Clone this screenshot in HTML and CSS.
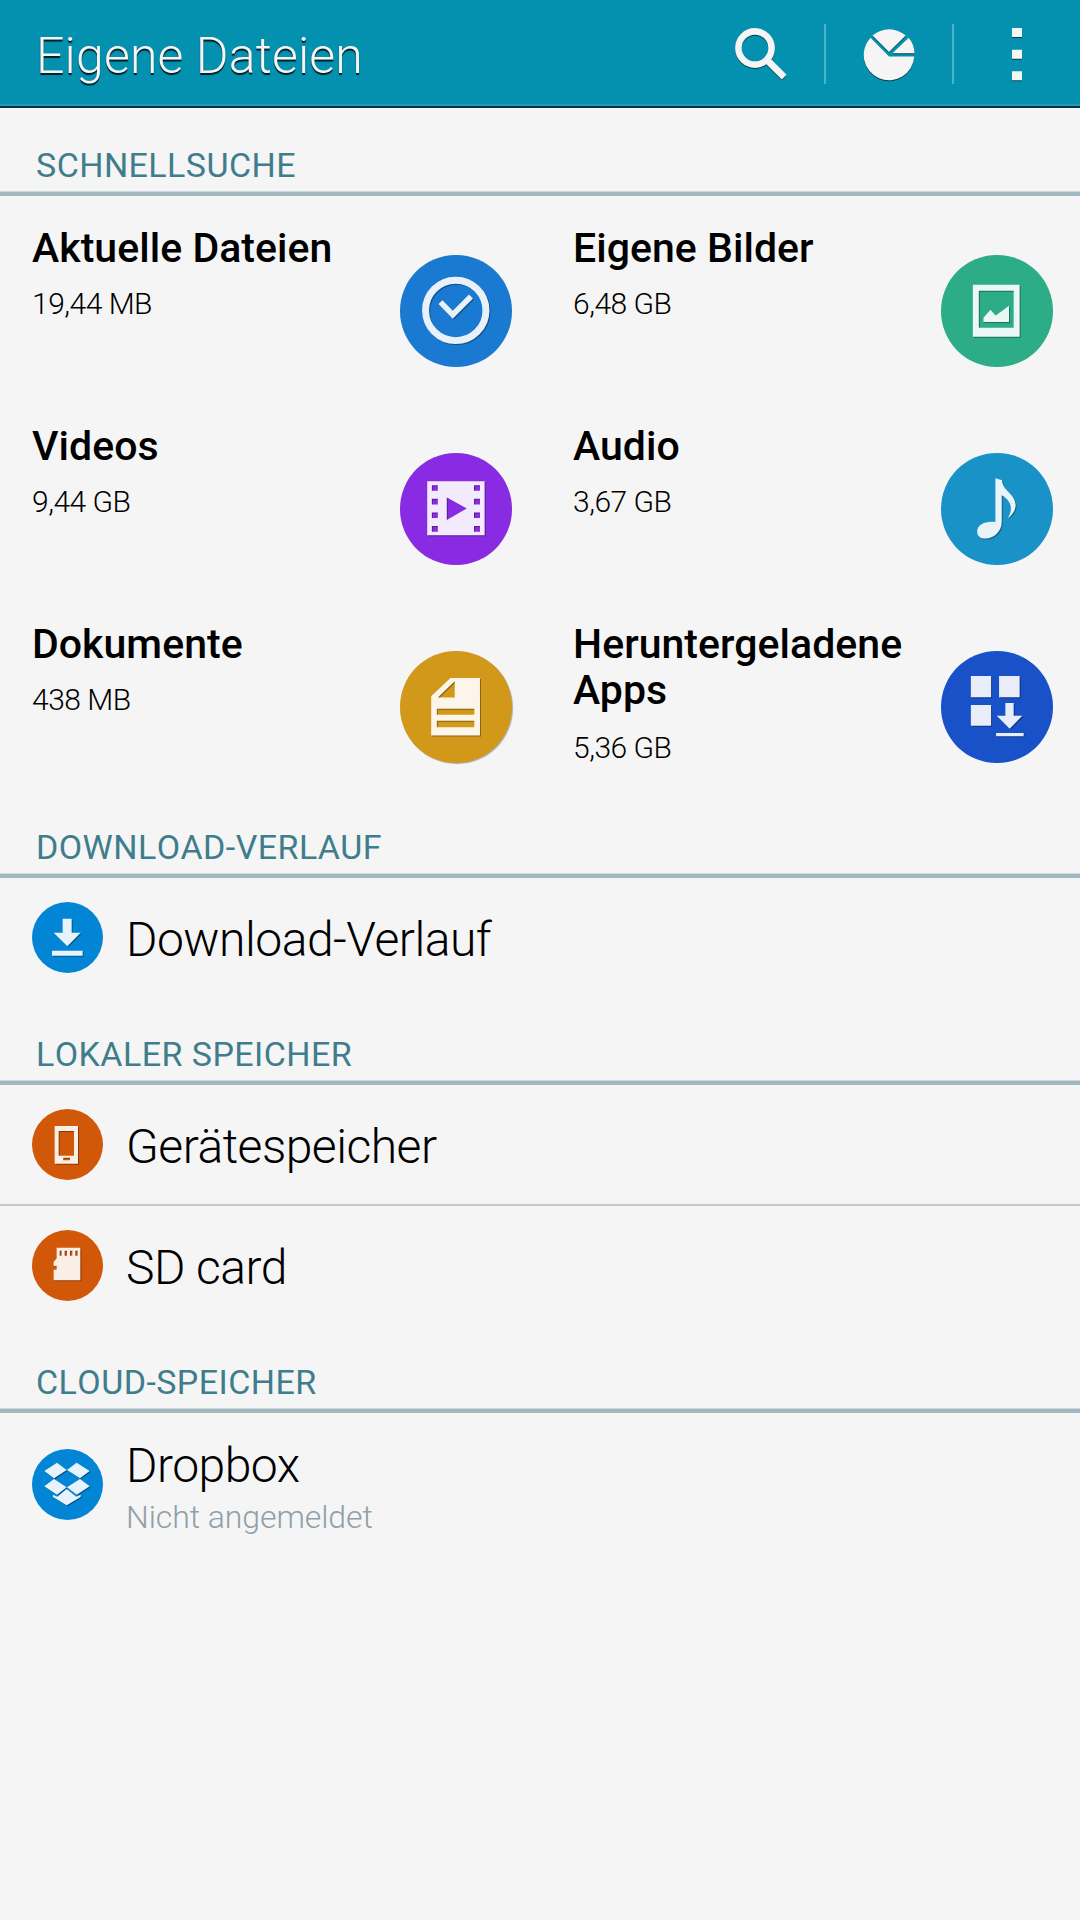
FILE: index.html
```html
<!DOCTYPE html>
<html lang="de">
<head>
<meta charset="utf-8">
<title>Eigene Dateien</title>
<link rel="stylesheet" href="styles.css">
</head>
<body>
<header class="bar">
  <h1 class="bar-title">Eigene Dateien</h1>
  <nav class="actions">
    <button class="action" aria-label="Suchen">
      <svg class="action-icon" viewBox="0 0 56 56"><circle cx="22" cy="22" r="16.6" fill="none" stroke="#f5f5f5" stroke-width="6.6"/><path d="M35.5 35.5 51.2 51.2" fill="none" stroke="#f5f5f5" stroke-width="6.8"/></svg>
    </button>
    <button class="action" aria-label="Speichernutzung">
      <svg class="action-icon" viewBox="0 0 56 56" fill="#f5f5f5"><path d="M9.5 11.7A25.3 25.3 0 1 0 53.3 30.5H28Z"/><path d="M11.5 9.5A25.3 25.3 0 0 1 44.7 9.5L28 26Z"/><path d="M47.7 11.8A25.3 25.3 0 0 1 53.5 27.2H31.5Z"/></svg>
    </button>
    <button class="action" aria-label="Mehr">
      <svg class="action-icon" viewBox="0 0 56 56" fill="#f5f5f5"><path d="M23 2h10v9H23zM23 23.7h10v9H23zM23 45.3h10v9H23z"/></svg>
    </button>
  </nav>
</header>
<main>
  <h2 class="section">SCHNELLSUCHE</h2>
  <div class="tiles">
    <div class="tile">
      <div class="tile-text"><h3 class="tile-title">Aktuelle Dateien</h3><p class="tile-size">19,44 MB</p></div>
      <div class="disc blue"><svg class="glyph" viewBox="30 45 336 336"><circle cx="198" cy="212" r="91" fill="none" stroke="#e8f1fa" stroke-width="21"/><path d="M152 187 189 225 244 170" fill="none" stroke="#e8f1fa" stroke-width="17"/></svg></div>
    </div>
    <div class="tile right">
      <div class="tile-text"><h3 class="tile-title">Eigene Bilder</h3><p class="tile-size">6,48 GB</p></div>
      <div class="disc green"><svg class="glyph" viewBox="33 45 336 336" fill="#eaf7f3"><path fill-rule="evenodd" d="M129 135H270V291H129ZM147 153V264H252V153Z"/><path d="M161 247V234L182 210 198 227 238 198V247Z"/></svg></div>
    </div>
    <div class="tile">
      <div class="tile-text"><h3 class="tile-title">Videos</h3><p class="tile-size">9,44 GB</p></div>
      <div class="disc purple"><svg class="glyph" viewBox="30 39 336 336" fill="#f4eafd"><path fill-rule="evenodd" d="M112 124H285V287H112ZM126 136V153H144V136ZM126 177V194H144V177ZM126 218V235H144V218ZM126 259V276H144V259ZM253 136V153H271V136ZM253 177V194H271V177ZM253 218V235H271V218ZM253 259V276H271V259ZM171 173V241L231 206Z"/></svg></div>
    </div>
    <div class="tile right">
      <div class="tile-text"><h3 class="tile-title">Audio</h3><p class="tile-size">3,67 GB</p></div>
      <div class="disc cyan"><svg class="glyph" viewBox="33 39 336 336" fill="#e8f4fa"><path d="M197 115 217 121C217 151 258 163 258 196C258 212 248 226 235 235C252 205 243 182 216 166V248C216 277 191 297 167 297C152 297 142 289 142 276C142 255 166 243 197 247Z"/></svg></div>
    </div>
    <div class="tile">
      <div class="tile-text"><h3 class="tile-title">Dokumente</h3><p class="tile-size">438 MB</p></div>
      <div class="disc amber"><svg class="glyph" viewBox="30 33 336 336" fill="#fcf5ea"><path fill-rule="evenodd" d="M182 114H271V288H124V169ZM195 124 144 173H195ZM141 207V225H254V207ZM141 243V263H254V243Z"/></svg></div>
    </div>
    <div class="tile right">
      <div class="tile-text"><h3 class="tile-title two-line">Heruntergeladene Apps</h3><p class="tile-size">5,36 GB</p></div>
      <div class="disc royal"><svg class="glyph" viewBox="33 33 336 336" fill="#e8edf9"><path d="M123 108H184V172H123ZM208 108H270V172H208ZM123 196H184V258H123ZM227 190H252V228H278L240 267 201 228H227ZM199 280H282V290H199Z"/></svg></div>
    </div>
  </div>

  <h2 class="section">DOWNLOAD-VERLAUF</h2>
  <div class="row">
    <div class="disc small sky"><svg class="glyph" viewBox="97 247 213 213" fill="#e6f3fb"><path d="M189 297H216V339H243L203 380 162 339H189ZM157 393H249V408H157Z"/></svg></div>
    <div class="row-title">Download-Verlauf</div>
  </div>

  <h2 class="section">LOKALER SPEICHER</h2>
  <div class="row">
    <div class="disc small orange"><svg class="glyph" viewBox="97 238 213 213" fill="#faefe6"><path fill-rule="evenodd" d="M165 289H235V402H165ZM177 304V378H223V304ZM191 384V392H211V384Z"/></svg></div>
    <div class="row-title">Gerätespeicher</div>
  </div>
  <div class="row divided">
    <div class="disc small orange"><svg class="glyph" viewBox="97 601 213 213" fill="#faefe6"><path fill-rule="evenodd" d="M171 654H242V752H162V720H171V709H162V697L171 686ZM180 663V678H186V663ZM195 663V678H202V663ZM211 663V678H218V663ZM227 663V678H234V663Z"/></svg></div>
    <div class="row-title">SD card</div>
  </div>

  <h2 class="section">CLOUD-SPEICHER</h2>
  <div class="row tall">
    <div class="disc small sky"><svg class="glyph" viewBox="97 298 213 213" fill="#e6f3fb"><path d="M172 339 201 361 163 386 134 364ZM231 339 270 364 241 386 202 361ZM163 388 201 413 172 435 134 410ZM241 388 270 410 231 435 202 413ZM201 418 230 441 243 435V442L201 467 160 442V435L173 441Z"/></svg></div>
    <div class="row-text"><div class="row-title">Dropbox</div><div class="row-note">Nicht angemeldet</div></div>
  </div>
</main>
</body>
</html>
```
FILE: styles.css
```css
* { box-sizing: border-box; margin: 0; padding: 0; }

body {
  width: 1080px;
  min-height: 1920px;
  background: #f5f5f5;
  color: #000;
  font-family: Roboto, "Liberation Sans", sans-serif;
}

.bar {
  display: flex;
  justify-content: space-between;
  height: 108px;
  padding-left: 36px;
  background: linear-gradient(#0391af 104px, #2499b4 104px 106px, #04304f 106px);
}

.bar-title {
  padding-top: 6px;
  font-size: 50px;
  font-weight: 300;
  line-height: 100px;
  letter-spacing: .15px;
  color: #f5f5f5;
  text-shadow: 0 2px 1px rgba(0, 0, 0, .8);
}

.actions { display: flex; }

.action {
  display: flex;
  align-items: center;
  justify-content: center;
  width: 126px;
  border: 0;
  background: none;
}

.action + .action {
  width: 128px;
  padding-left: 2px;
  background: linear-gradient(#4fb3c8, #4fb3c8) 0 24px / 2px 60px no-repeat;
}

.action-icon {
  width: 56px;
  height: 56px;
  overflow: visible;
  filter: drop-shadow(0 1px 0 rgba(0, 0, 0, .55));
}

.section {
  display: flex;
  align-items: flex-end;
  height: 88px;
  padding: 0 36px 7px;
  border-bottom: 4px solid #a0b9c0;
  box-shadow: inset 0 -1px #cbd8db;
  font-size: 34px;
  font-weight: 400;
  line-height: 40px;
  letter-spacing: .44px;
  font-kerning: none;
  color: #3f7d8c;
}

.tiles {
  display: grid;
  grid-template-columns: 540px 540px;
  grid-auto-rows: 198px;
}

.tile {
  display: flex;
  justify-content: space-between;
  padding: 29px 28.5px 0 32px;
}

.tile.right { padding-right: 27.5px; padding-left: 33px; }

.tile-text { flex: 1; }

.tile-title {
  font-size: 41px;
  font-weight: 500;
  line-height: 46px;
  letter-spacing: .04px;
}

.tile-title.two-line { padding-bottom: 2px; }

.tile-size {
  margin-top: 15px;
  font-size: 30px;
  font-weight: 300;
  line-height: 36px;
  letter-spacing: -.5px;
}

.disc {
  flex: none;
  width: 111.5px;
  height: 111.5px;
  margin-top: 30px;
  border-radius: 50%;
}

.disc.small { width: 71px; height: 71px; margin-top: 0; }

.glyph {
  display: block;
  width: 100%;
  height: 100%;
  filter: drop-shadow(1px 1px 0 rgba(0, 0, 0, .35));
}

.blue { background: #1a79d0; }
.green { background: #2cad87; }
.purple { background: #882be2; }
.cyan { background: #1993c7; }
.amber { background: #d2981a; box-shadow: 1px 1px 1px rgba(0, 0, 0, .3); }
.royal { background: #1851c8; }
.sky { background: #0385d5; }
.orange { background: #d15809; }

.row {
  display: flex;
  align-items: center;
  gap: 23px;
  height: 119px;
  padding-left: 32px;
}

.row.divided { height: 121px; border-top: 2px solid #c0cacf; }
.row.tall { height: 143px; }

.row-title {
  padding-top: 4px;
  font-size: 48px;
  font-weight: 300;
  line-height: 56px;
  letter-spacing: -.5px;
}

.row-text { padding-top: 2px; }

.row-note {
  margin-top: 3px;
  font-size: 32px;
  font-weight: 300;
  line-height: 40px;
  letter-spacing: -.07px;
  color: #8fa0a8;
}
```
